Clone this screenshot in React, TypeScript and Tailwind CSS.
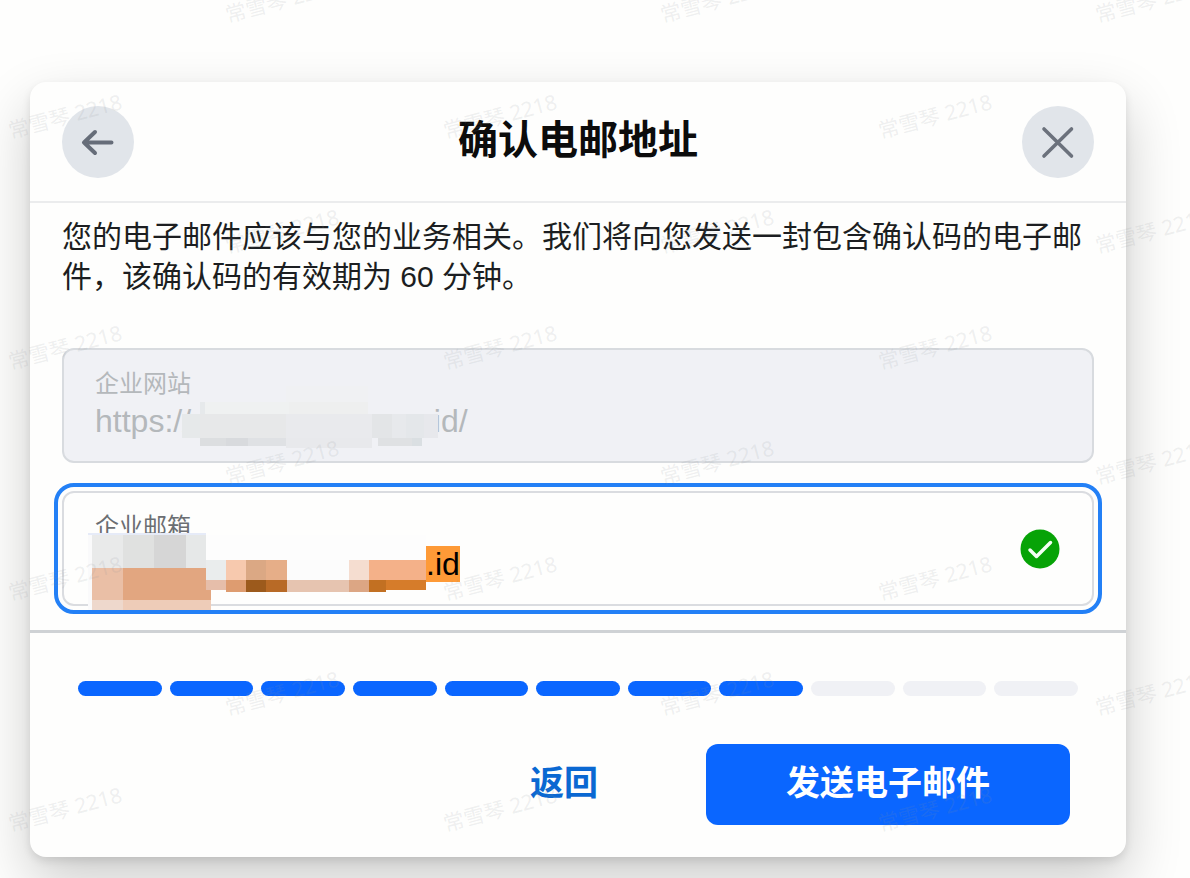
import React, { useState } from 'react';

type Block = [number, number, number, number, string];

const SANS = "font-['Liberation_Sans','Noto_Sans_CJK_SC',sans-serif]";

// x, y, width, height, colour
const WEBSITE_MASK: Block[] = [
  [104, 0, 82, 16, '#f0f1f3'],
  [18, 16, 5, 12, '#e6e9eb'],
  [23, 16, 84, 12, '#eff1f1'],
  [107, 16, 79, 12, '#eeefef'],
  [0, 28, 18, 24, '#e6e9ea'],
  [18, 28, 86, 24, '#e7e8e9'],
  [104, 28, 86, 24, '#e9eaed'],
  [190, 28, 20, 24, '#e3e5e7'],
  [210, 28, 14, 24, '#e7e9ec'],
  [224, 28, 18, 24, '#e4e7ea'],
  [242, 28, 14, 24, '#e7e8ec'],
  [18, 52, 26, 8, '#dcdee0'],
  [44, 52, 22, 8, '#d8dadd'],
  [66, 52, 38, 8, '#dfe1e4'],
  [104, 52, 86, 10, '#e8e9ec'],
  [196, 52, 34, 8, '#dfe1e3'],
  [230, 52, 10, 8, '#dadfe2'],
];

const EMAIL_MASK: Block[] = [
  [0, 0, 4, 77, '#fafafb'],
  [4, 2, 31, 33, '#e9eaea'],
  [35, 2, 31, 33, '#e0e1e0'],
  [66, 2, 32, 33, '#d6d6d6'],
  [98, 2, 20, 33, '#e6e8e8'],
  [0, 0, 118, 2, '#e6ebf8'],
  [4, 35, 31, 32, '#eabfa6'],
  [35, 35, 88, 32, '#e2a680'],
  [4, 67, 31, 10, '#eed8cc'],
  [35, 67, 88, 10, '#eeccb8'],
  [118, 2, 220, 25, '#fdfdfd'],
  [118, 27, 20, 20, '#eaeded'],
  [138, 27, 20, 20, '#f7c9ae'],
  [158, 27, 20, 20, '#dba884'],
  [178, 27, 21, 20, '#e6ae88'],
  [199, 27, 62, 20, '#fcfcfc'],
  [261, 27, 20, 20, '#f5ddd0'],
  [281, 27, 57, 20, '#f4b189'],
  [118, 47, 20, 10, '#e6beaa'],
  [138, 47, 20, 12, '#de9c70'],
  [158, 47, 20, 12, '#9c5a1c'],
  [178, 47, 21, 12, '#b86a26'],
  [199, 47, 62, 12, '#e6c4b0'],
  [261, 47, 20, 12, '#dca684'],
  [281, 47, 17, 12, '#c27022'],
  [298, 47, 40, 10, '#d67c2a'],
];

const TOTAL_STEPS = 11;
const DONE_STEPS = 8;

const Mosaic = ({ blocks, className }: { blocks: Block[]; className: string }) => (
  <svg className={`absolute pointer-events-none ${className}`} shapeRendering="crispEdges" aria-hidden="true">
    {blocks.map(([x, y, w, h, fill], i) => (
      <rect key={i} x={x} y={y} width={w} height={h} fill={fill} />
    ))}
  </svg>
);

const Watermark = () => (
  <div className="absolute inset-0 overflow-hidden pointer-events-none select-none" aria-hidden="true">
    {Array.from({ length: 8 }, (_, row) =>
      Array.from({ length: 3 }, (_, col) => (
        <span
          key={`${row}-${col}`}
          className="absolute w-32 -rotate-15 text-center text-[21px] leading-6 whitespace-nowrap text-[#8c9196]/14 font-['Noto_Sans','Noto_Sans_CJK_SC',sans-serif]"
          style={{
            left: col * 435 + (row % 2 === 0 ? 218 : 1),
            top: Math.round(row * 115.5) - 12,
          }}
        >
          常雪琴 2218
        </span>
      ))
    )}
  </div>
);

const App = () => {
  const [website, setWebsite] = useState('https://' + '\u00a0'.repeat(27) + '\u200aid/');
  const [email, setEmail] = useState('.id');

  return (
    <div className={`relative min-h-screen overflow-hidden bg-[#fefefd] pt-[82px] pr-16 pb-5 pl-[30px] text-[#1c1e21] ${SANS}`}>
      <main className="rounded-2xl bg-[#fefefd] shadow-[0_24px_56px_rgba(0,0,0,0.2),0_4px_8px_rgba(0,0,0,0.1)]">
        <header className="flex items-start justify-between border-b-2 border-[#ebeced] px-8 pt-6 pb-[23px]">
          <button aria-label="返回上一步" className="flex size-18 items-center justify-center rounded-full bg-[#e1e5ea]">
            <svg className="size-9" viewBox="0 0 36 36" fill="none" stroke="#666d79" strokeWidth="4" strokeLinecap="round" strokeLinejoin="round">
              <path d="M31.500 18.500H4M15 8L4 18.500L15 29" />
            </svg>
          </button>
          <h1 className="pt-1 text-[40px] leading-[60px] font-bold text-[#0c0c0c]">确认电邮地址</h1>
          <button aria-label="关闭" className="flex size-18 items-center justify-center rounded-full bg-[#e1e5ea]">
            <svg className="size-9" viewBox="0 0 36 36" fill="none" stroke="#6b717c" strokeWidth="3.600" strokeLinecap="round">
              <path d="M4 5L31.500 32M31.500 5L4 32" />
            </svg>
          </button>
        </header>

        <section className="px-8 pt-[14px] pb-6">
          <p className="text-[30px] leading-10">
            您的电子邮件应该与您的业务相关。我们将向您发送一封包含确认码的电子邮件，该确认码的有效期为 60 分钟。
          </p>

          {/* Website, locked */}
          <div className="relative mt-[51px] h-[115px] rounded-xl border-2 border-[#d8dbdf] bg-[#f0f1f5] px-[31px] pt-[18px] text-[#b4b8bb]">
            <label htmlFor="website" className="block text-2xl leading-8">企业网站</label>
            <input
              id="website"
              type="text"
              readOnly
              value={website}
              onChange={(e) => setWebsite(e.target.value)}
              className="block h-[42px] w-full bg-transparent text-[32px] outline-none"
            />
            <Mosaic blocks={WEBSITE_MASK} className="top-9 left-[118px] h-16 w-64" />
          </div>

          {/* Email */}
          <div className="relative mt-7 h-[115px] rounded-xl border-2 border-[#dadce0] px-[31px] pt-[18px] outline-4 outline-offset-4 outline-[#2380f6]">
            <label htmlFor="email" className="block text-2xl leading-8 text-[#6b6e72]">企业邮箱</label>
            <span className="absolute top-[53px] left-[362px] h-9 w-[34px] bg-[#fe9a37]" />
            <input
              id="email"
              type="text"
              value={email}
              onChange={(e) => setEmail(e.target.value)}
              className="relative block h-[42px] w-full bg-transparent pr-14 pl-[331px] text-[32px] text-black outline-none"
            />
            <Mosaic blocks={EMAIL_MASK} className="top-10 left-6 h-20 w-[338px]" />
            <svg className="absolute top-9 right-8 size-10" viewBox="0 0 40 40" fill="none">
              <circle cx="20" cy="20" r="19.500" fill="#07a307" />
              <path d="M10 21L16.500 27.500L30.500 13.500" stroke="#f5fff5" strokeWidth="3.500" strokeLinecap="round" strokeLinejoin="round" />
            </svg>
          </div>
        </section>

        <footer className="border-t-3 border-[#cfd2d5] pt-12 pb-8">
          <div className="flex gap-2 px-12" role="progressbar" aria-valuemin={0} aria-valuemax={TOTAL_STEPS} aria-valuenow={DONE_STEPS}>
            {Array.from({ length: TOTAL_STEPS }, (_, i) => (
              <div key={i} className={`h-[15px] flex-1 rounded-full ${i < DONE_STEPS ? 'bg-[#0a66ff]' : 'bg-[#f0f1f5]'}`} />
            ))}
          </div>
          <div className="mt-12 flex justify-end gap-27 px-14 text-[34px] leading-[76px] font-bold">
            <button className="h-[81px] pb-1 text-[#0a68d2]">返回</button>
            <button className="h-[81px] rounded-xl bg-[#0a66ff] px-20 pb-1 text-white">发送电子邮件</button>
          </div>
        </footer>
      </main>
      <Watermark />
    </div>
  );
};

export default App;
